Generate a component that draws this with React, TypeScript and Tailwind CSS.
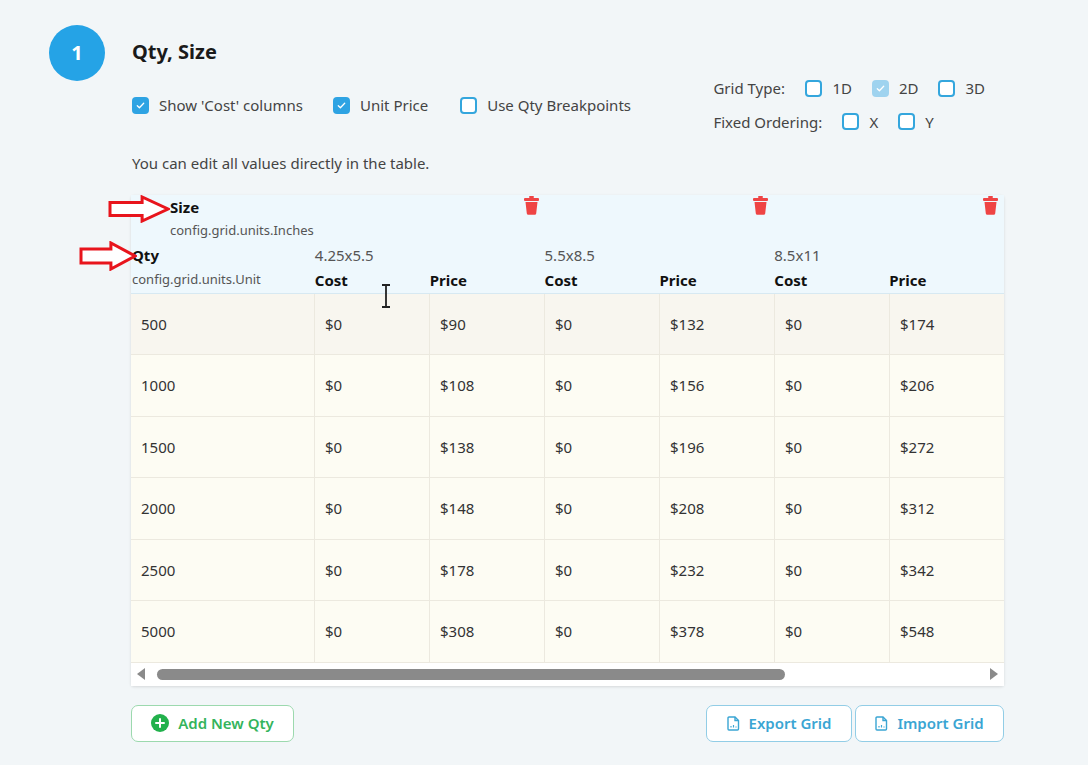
import React from 'react'

const font = { fontFamily: '"Noto Sans", "Open Sans", Arial, sans-serif' }

const sizes = ['4.25x5.5', '5.5x8.5', '8.5x11']
const rows: [string, string[]][] = [
  ['500', ['$0', '$90', '$0', '$132', '$0', '$174']],
  ['1000', ['$0', '$108', '$0', '$156', '$0', '$206']],
  ['1500', ['$0', '$138', '$0', '$196', '$0', '$272']],
  ['2000', ['$0', '$148', '$0', '$208', '$0', '$312']],
  ['2500', ['$0', '$178', '$0', '$232', '$0', '$342']],
  ['5000', ['$0', '$308', '$0', '$378', '$0', '$548']],
]

function Check({ checked, muted }: { checked?: boolean; muted?: boolean }) {
  if (checked) {
    return (
      <span
        className={
          'flex h-[17px] w-[17px] items-center justify-center rounded-[4px] ' +
          (muted ? 'bg-[#9fd3ef]' : 'bg-[#2ea3e3]')
        }
      >
        <svg width="11" height="11" viewBox="0 0 12 12" fill="none">
          <path d="M2.5 6.2l2.3 2.3 4.7-5" stroke="white" strokeWidth="1.4" strokeLinecap="round" strokeLinejoin="round" />
        </svg>
      </span>
    )
  }
  return <span className="h-[17px] w-[17px] rounded-[4px] border-2 border-[#34a6dd] bg-white" />
}

function Trash() {
  return (
    <svg width="17" height="19" viewBox="0 0 17 19">
      <rect x="6" y="0" width="5" height="2" rx="1" fill="#ef4444" />
      <rect x="1" y="2" width="15" height="3" rx="1" fill="#ef4444" />
      <path d="M2.5 6h12l-1.3 11.5a1.5 1.5 0 0 1-1.5 1.3H5.3a1.5 1.5 0 0 1-1.5-1.3z" fill="#ef4444" />
    </svg>
  )
}

function Arrow({ w, h }: { w: number; h: number }) {
  const shaftTop = h * 0.27
  const shaftBot = h * 0.73
  const headX = w * 0.55
  return (
    <svg width={w} height={h} viewBox={`0 0 ${w} ${h}`}>
      <path
        d={`M2 ${shaftTop} H${headX} V2 L${w - 2} ${h / 2} L${headX} ${h - 2} V${shaftBot} H2 Z`}
        fill="white"
        stroke="#e8141c"
        strokeWidth="3"
        strokeLinejoin="miter"
      />
    </svg>
  )
}

function FileIcon() {
  return (
    <svg width="13" height="15" viewBox="0 0 13 15" fill="none">
      <path d="M2 1h6l3.5 3.5V13a1 1 0 0 1-1 1H2a1 1 0 0 1-1-1V2a1 1 0 0 1 1-1z" stroke="#3aa5d3" strokeWidth="1.4" />
      <path d="M8 1v3.5h3.5" stroke="#3aa5d3" strokeWidth="1.4" />
      <path d="M4 10v1.5M6.5 9v2.5M9 10.5v1" stroke="#3aa5d3" strokeWidth="1.2" />
    </svg>
  )
}

export default function App() {
  return (
    <div className="min-h-[765px] w-[1088px] bg-[#f2f6f8] text-[#333]" style={font}>
      <div className="relative pt-6 pl-[49px]">
        <div className="flex items-start">
          <div className="mt-[1px] flex h-[56px] w-[56px] items-center justify-center rounded-full bg-[#25a3e6] text-[20px] font-bold text-white">
            1
          </div>
          <div className="ml-[27px] flex-1">
            <div className="flex items-start justify-between pr-[103px]">
              <div>
                <h1 className="mt-[14px] text-[20px] font-bold leading-[28px] text-[#1a1a1a]">Qty, Size</h1>
                <div className="mt-[28px] flex items-center text-[15px] text-[#444]">
                  <label className="flex items-center gap-[10px]">
                    <Check checked /> Show 'Cost' columns
                  </label>
                  <label className="ml-[30px] flex items-center gap-[10px]">
                    <Check checked /> Unit Price
                  </label>
                  <label className="ml-[32px] flex items-center gap-[10px]">
                    <Check /> Use Qty Breakpoints
                  </label>
                </div>
              </div>
              <div className="mt-[53px] flex flex-col gap-[11px] text-[15px] text-[#444]">
                <div className="flex items-center">
                  <span className="w-[92px]">Grid Type:</span>
                  <label className="flex items-center gap-[10px]">
                    <Check /> 1D
                  </label>
                  <label className="ml-[20px] flex items-center gap-[10px]">
                    <Check checked muted /> 2D
                  </label>
                  <label className="ml-[20px] flex items-center gap-[10px]">
                    <Check /> 3D
                  </label>
                </div>
                <div className="flex items-center">
                  <span className="w-[129px]">Fixed Ordering:</span>
                  <label className="flex items-center gap-[10px]">
                    <Check /> X
                  </label>
                  <label className="ml-[20px] flex items-center gap-[10px]">
                    <Check /> Y
                  </label>
                </div>
              </div>
            </div>
            <p className="mt-[19px] text-[15px] text-[#444]">You can edit all values directly in the table.</p>
          </div>
        </div>

        <div className="relative ml-[82px] mt-[20px] w-[873px] rounded-[3px] bg-white shadow-[0_1px_3px_rgba(0,0,0,0.12)]">
          <div className="border-b border-[#d7e9f2] bg-[#eef8fd]">
            <div className="flex h-[49px]">
              <div className="w-[184px] pl-[39px] pt-[2px]">
                <div className="text-[15px] font-bold leading-[20px] text-[#111]">Size</div>
                <div className="mt-[5px] text-[13px] leading-[16px] text-[#555]">config.grid.units.Inches</div>
              </div>
              {sizes.map((s) => (
                <div key={s} className="flex w-[230px] justify-end pt-[1px] pr-[5px]">
                  <Trash />
                </div>
              ))}
            </div>
            <div className="flex h-[49px]">
              <div className="w-[184px] pl-[1px]">
                <div className="text-[15px] font-bold leading-[22px] text-[#111]">Qty</div>
                <div className="mt-[5px] text-[13px] leading-[16px] text-[#555]">config.grid.units.Unit</div>
              </div>
              {sizes.map((s) => (
                <div key={s} className="w-[230px]">
                  <div className="text-[15px] leading-[22px] text-[#555]">{s}</div>
                  <div className="mt-[4px] flex text-[15px] font-bold leading-[20px] text-[#111]">
                    <span className="w-[115px]">Cost</span>
                    <span>Price</span>
                  </div>
                </div>
              ))}
            </div>
          </div>

          {rows.map(([q, vals], i) => (
            <div
              key={q}
              className={
                'flex h-[61.5px] border-b border-[#ece9df] text-[15px] text-[#333] ' +
                (i === 0 ? 'bg-[#f8f6ef]' : 'bg-[#fdfcf3]')
              }
            >
              <div className="flex w-[184px] items-center border-r border-[#ece9df] pl-[10px]">{q}</div>
              {vals.map((v, j) => (
                <div
                  key={j}
                  className={
                    'flex items-center pl-[10px] ' +
                    (j < 5 ? 'w-[115px] border-r border-[#ece9df]' : 'flex-1')
                  }
                >
                  {v}
                </div>
              ))}
            </div>
          ))}

          <div className="flex h-[23px] items-center bg-white px-[5px]">
            <svg width="10" height="12" viewBox="0 0 10 12">
              <path d="M9 0v12L1 6z" fill="#8a8a8a" />
            </svg>
            <div className="ml-[11px] h-[11px] w-[628px] rounded-full bg-[#8a8a8a]" />
            <div className="flex-1" />
            <svg width="10" height="12" viewBox="0 0 10 12">
              <path d="M1 0v12l8-6z" fill="#8a8a8a" />
            </svg>
          </div>

          <div className="pointer-events-none absolute left-[-23px] top-[0px]">
            <Arrow w={62} h={28} />
          </div>
          <div className="pointer-events-none absolute left-[-52px] top-[46px]">
            <Arrow w={58} h={30} />
          </div>
          <svg className="pointer-events-none absolute left-[249px] top-[89px]" width="12" height="24" viewBox="0 0 12 24">
            <path d="M2 1h8M6 1v22M2 23h8" stroke="#222" strokeWidth="1.8" />
          </svg>
        </div>

        <div className="ml-[82px] mt-[19px] flex w-[873px] items-center">
          <button className="flex h-[37px] w-[163px] items-center justify-center gap-[9px] rounded-[7px] border border-[#9cd9ae] bg-white text-[15px] font-semibold text-[#34b45c]">
            <svg width="18" height="18" viewBox="0 0 18 18">
              <circle cx="9" cy="9" r="9" fill="#22b14c" />
              <path d="M9 5v8M5 9h8" stroke="white" strokeWidth="2" strokeLinecap="round" />
            </svg>
            Add New Qty
          </button>
          <div className="flex-1" />
          <button className="flex h-[37px] w-[146px] items-center justify-center gap-[9px] rounded-[7px] border border-[#92cde6] bg-white text-[15px] font-semibold text-[#3aa5d3]">
            <FileIcon />
            Export Grid
          </button>
          <button className="ml-[3px] flex h-[37px] w-[149px] items-center justify-center gap-[9px] rounded-[7px] border border-[#92cde6] bg-white text-[15px] font-semibold text-[#3aa5d3]">
            <FileIcon />
            Import Grid
          </button>
        </div>
      </div>
    </div>
  )
}
